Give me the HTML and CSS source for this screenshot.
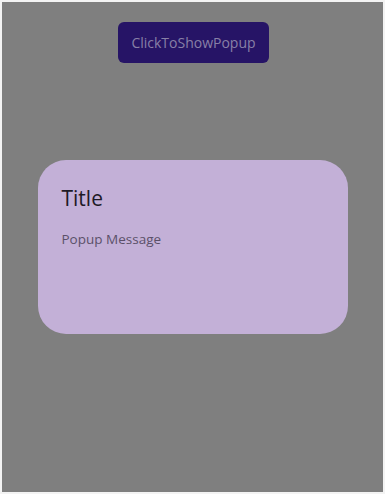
FILE: index.html
```html
<!DOCTYPE html>
<html lang="en">
<head>
  <meta charset="UTF-8" />
  <meta name="viewport" content="width=device-width, initial-scale=1" />
  <title>Popup</title>
  <link rel="stylesheet" href="styles.css">
</head>
<body>
  <div class="window">
    <div class="stage">
      <button class="show-btn">ClickToShowPopup</button>

      <!-- popup ligt over de pagina -->
      <div class="popup" role="dialog" aria-label="Title">
        <div class="popup-title">Title</div>
        <div class="popup-msg">Popup Message</div>
      </div>
    </div>
  </div>
</body>
</html>
```

FILE: styles.css
```css
html, body {
  margin: 0;
  height: 100%;
}
body {
  font-family: 'Open Sans', 'Noto Sans', sans-serif;
  background: #f3f3f3;
}
.window {
  box-sizing: border-box;
  height: 100%;
  padding: 2px;
}
.stage {
  height: 100%;
  background: #7f7f7f;
  display: grid;
  justify-items: center;
}
.stage > * {
  grid-area: 1 / 1;
}
.show-btn {
  align-self: start;
  margin-top: 20px;
  margin-left: 2px;
  width: 151px;
  height: 41px;
  background: #261466;
  color: #8880a6;
  border: none;
  border-radius: 6px;
  font-family: inherit;
  font-size: 14px;
  padding: 0;
  cursor: pointer;
}
.popup {
  align-self: center;
  box-sizing: border-box;
  width: 310px;
  height: 174px;
  background: #c3b0d7;
  border-radius: 28px;
  padding: 23px 24px;
}
.popup-title {
  font-size: 21px;
  color: #1e1a26;
  line-height: 30px;
}
.popup-msg {
  margin-top: 17px;
  font-size: 13.5px;
  color: #5b5069;
}
```
